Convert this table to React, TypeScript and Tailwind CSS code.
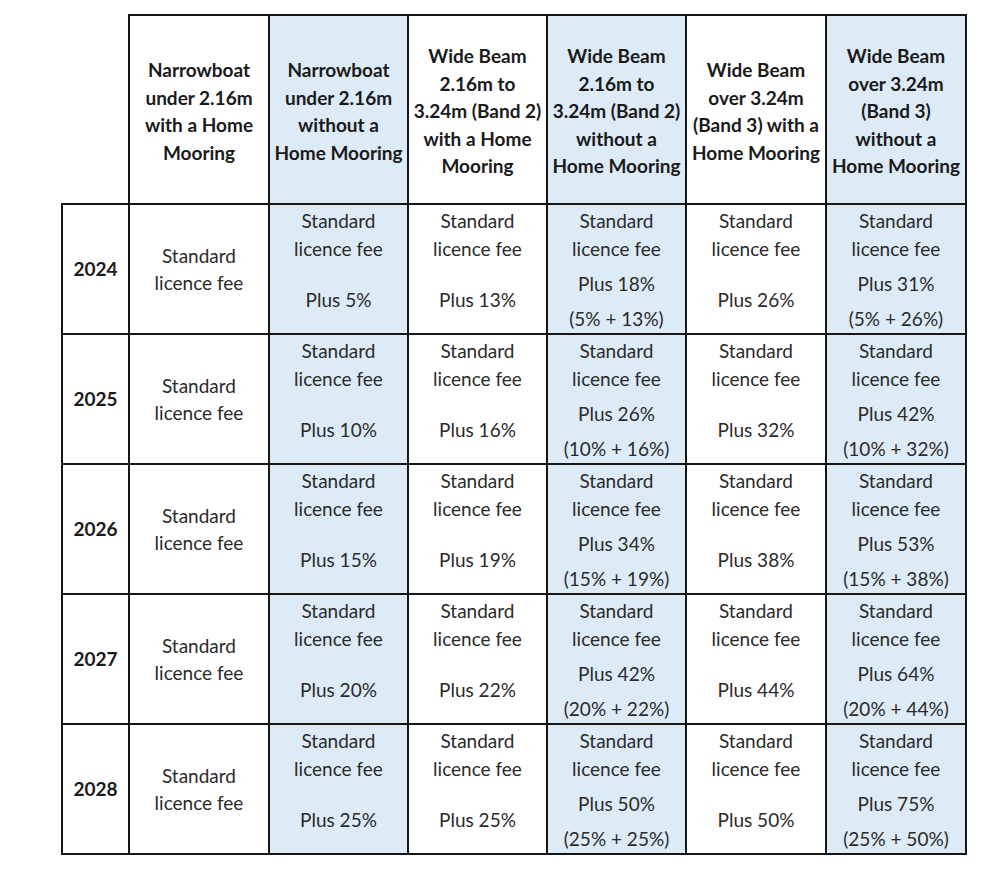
import React from 'react'

type Fee = { plus: string; split?: string }

const headers: { lines: string[]; blue: boolean }[] = [
  { lines: ['Narrowboat', 'under 2.16m', 'with a Home', 'Mooring'], blue: false },
  { lines: ['Narrowboat', 'under 2.16m', 'without a', 'Home Mooring'], blue: true },
  { lines: ['Wide Beam', '2.16m to', '3.24m (Band 2)', 'with a Home', 'Mooring'], blue: false },
  { lines: ['Wide Beam', '2.16m to', '3.24m (Band 2)', 'without a', 'Home Mooring'], blue: true },
  { lines: ['Wide Beam', 'over 3.24m', '(Band 3) with a', 'Home Mooring'], blue: false },
  { lines: ['Wide Beam', 'over 3.24m', '(Band 3)', 'without a', 'Home Mooring'], blue: true },
]

const rows: { year: string; fees: Fee[] }[] = [
  {
    year: '2024',
    fees: [
      { plus: 'Plus 5%' },
      { plus: 'Plus 13%' },
      { plus: 'Plus 18%', split: '(5% + 13%)' },
      { plus: 'Plus 26%' },
      { plus: 'Plus 31%', split: '(5% + 26%)' },
    ],
  },
  {
    year: '2025',
    fees: [
      { plus: 'Plus 10%' },
      { plus: 'Plus 16%' },
      { plus: 'Plus 26%', split: '(10% + 16%)' },
      { plus: 'Plus 32%' },
      { plus: 'Plus 42%', split: '(10% + 32%)' },
    ],
  },
  {
    year: '2026',
    fees: [
      { plus: 'Plus 15%' },
      { plus: 'Plus 19%' },
      { plus: 'Plus 34%', split: '(15% + 19%)' },
      { plus: 'Plus 38%' },
      { plus: 'Plus 53%', split: '(15% + 38%)' },
    ],
  },
  {
    year: '2027',
    fees: [
      { plus: 'Plus 20%' },
      { plus: 'Plus 22%' },
      { plus: 'Plus 42%', split: '(20% + 22%)' },
      { plus: 'Plus 44%' },
      { plus: 'Plus 64%', split: '(20% + 44%)' },
    ],
  },
  {
    year: '2028',
    fees: [
      { plus: 'Plus 25%' },
      { plus: 'Plus 25%' },
      { plus: 'Plus 50%', split: '(25% + 25%)' },
      { plus: 'Plus 50%' },
      { plus: 'Plus 75%', split: '(25% + 50%)' },
    ],
  },
]

const line = 'border-2 border-[#161616]'

function FeeCell({ fee, blue }: { fee: Fee; blue: boolean }) {
  return (
    <td className={`${line} ${blue ? 'bg-[#ddebf7]' : 'bg-white'} align-top p-0`}>
      <div className="flex flex-col items-center pt-[2px] leading-[28px] whitespace-nowrap">
        <span>Standard</span>
        <span>licence fee</span>
        {fee.split ? (
          <>
            <span className="mt-[7px]">{fee.plus}</span>
            <span className="mt-[7px]">{fee.split}</span>
          </>
        ) : (
          <span className="mt-[23px]">{fee.plus}</span>
        )}
      </div>
    </td>
  )
}

export default function App() {
  return (
    <div
      className="min-h-[889px] bg-white pt-[14px] pl-[61px] text-[19px] text-[#2a2a2a]"
      style={{ fontFamily: 'Lato, "Open Sans", sans-serif' }}
    >
      <table className="table-fixed border-collapse w-[904px]">
        <colgroup>
          <col className="w-[67px]" />
          <col className="w-[140px]" />
          <col className="w-[139px]" />
          <col className="w-[139px]" />
          <col className="w-[139px]" />
          <col className="w-[140px]" />
          <col className="w-[140px]" />
        </colgroup>
        <thead>
          <tr className="h-[189px]">
            <th className="border-0 p-0" />
            {headers.map((h, i) => (
              <th
                key={i}
                className={`${line} ${h.blue ? 'bg-[#ddebf7]' : 'bg-white'} p-0 pt-[3px] align-middle font-bold text-[#1a1a1a]`}
              >
                <div className="flex flex-col items-center leading-[27.5px] whitespace-nowrap">
                  {h.lines.map((l, j) => (
                    <span key={j}>{l}</span>
                  ))}
                </div>
              </th>
            ))}
          </tr>
        </thead>
        <tbody>
          {rows.map((r) => (
            <tr key={r.year} className="h-[130px]">
              <td className={`${line} p-0 text-center align-middle font-bold text-[#1a1a1a]`}>{r.year}</td>
              <td className={`${line} p-0 text-center align-middle leading-[27px]`}>
                <div>Standard</div>
                <div>licence fee</div>
              </td>
              {r.fees.map((f, i) => (
                <FeeCell key={i} fee={f} blue={i % 2 === 0} />
              ))}
            </tr>
          ))}
        </tbody>
      </table>
    </div>
  )
}
